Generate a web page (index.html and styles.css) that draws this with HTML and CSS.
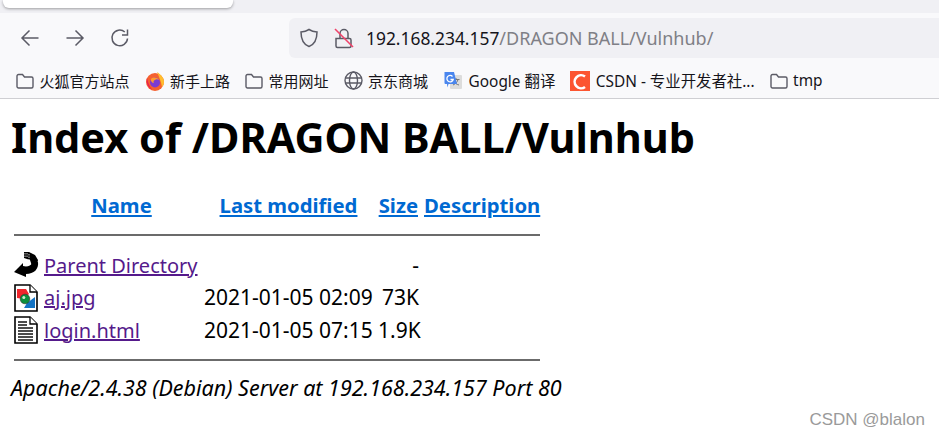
FILE: index.html
```html
<!DOCTYPE html>
<html lang="en">
<head>
    <meta charset="UTF-8">
    <title>Index of /DRAGON BALL/Vulnhub</title>
    <link rel="stylesheet" href="styles.css">
</head>
<body>
    <div class="tabstrip">
        <div class="tab"></div>
    </div>

    <div class="navbar">
        <div class="nav-btns">
            <svg class="nav-icon" width="20" height="20" viewBox="0 0 20 20"><path d="M18.5 10H2M9.5 2.500L2 10l7.500 7.500"/></svg>
            <svg class="nav-icon" width="20" height="20" viewBox="0 0 20 20"><path d="M1.500 10H18M10.500 2.500L18 10l-7.500 7.500"/></svg>
            <svg class="nav-icon" width="20" height="20" viewBox="0 0 20 20"><path d="M17.500 10.500A7.800 7.800 0 1 1 14.800 4M17.500 1.500v5.500H12"/></svg>
        </div>
        <div class="urlbar">
            <svg class="nav-icon shield" width="20" height="20" viewBox="0 0 20 20"><path d="M10 1.500c2.300 1.500 4.800 2.300 8 2.500 0 8-2.500 12.500-8 14.500C4.500 16.500 2 12 2 4c3.200-.2 5.700-1 8-2.500z"/></svg>
            <svg class="lock" width="20" height="22" viewBox="0 0 20 22">
                <path class="lock-body" d="M2 11.500h13.500a1.500 1.500 0 0 1 1.500 1.500v6a1.500 1.500 0 0 1-1.500 1.500h-12a1.500 1.500 0 0 1-1.500-1.500zM6 11V6.500a4 4 0 0 1 8 0V11"/>
                <path class="lock-slash" d="M1 2l18 18"/>
            </svg>
            <div class="url">192.168.234.157<span class="url-path">/DRAGON BALL/Vulnhub/</span></div>
        </div>
    </div>

    <div class="bookmarks">
        <div class="bm">
            <svg class="folder" width="18" height="16" viewBox="0 0 18 16"><path d="M1 3a1.500 1.500 0 0 1 1.500-1.500h4l2 2.500h7A1.500 1.500 0 0 1 17 5.500v8a1.500 1.500 0 0 1-1.500 1.500h-13A1.500 1.500 0 0 1 1 13.500z"/></svg>
            <span>火狐官方站点</span>
        </div>
        <div class="bm">
            <svg width="20" height="20" viewBox="0 0 20 20">
                <circle cx="10" cy="11" r="9" fill="#f5602f"/>
                <path d="M12 1c3 2 7 5 7 10 0 2-1 4-2 5-1-6-3-10-5-15z" fill="#ffbd2e"/>
                <path d="M2 7c-1 4 0 9 5 11.500C4 15 3 11 2 7z" fill="#e8204f"/>
                <circle cx="10" cy="11.500" r="5" fill="#7a3bd1"/>
                <path d="M6 8c2-2 6-2 8 1-2-1-3-1-4 0-1.500.5-2 2-1 3-2 0-3.500-2-3-4z" fill="#ff9a2e"/>
            </svg>
            <span>新手上路</span>
        </div>
        <div class="bm">
            <svg class="folder" width="18" height="16" viewBox="0 0 18 16"><path d="M1 3a1.500 1.500 0 0 1 1.500-1.500h4l2 2.500h7A1.500 1.500 0 0 1 17 5.500v8a1.500 1.500 0 0 1-1.500 1.500h-13A1.500 1.500 0 0 1 1 13.500z"/></svg>
            <span>常用网址</span>
        </div>
        <div class="bm">
            <svg class="globe" width="19" height="19" viewBox="0 0 19 19">
                <circle cx="9.500" cy="9.500" r="8.500"/>
                <ellipse cx="9.500" cy="9.500" rx="4" ry="8.500"/>
                <path d="M1 7h17M1 12h17"/>
            </svg>
            <span>京东商城</span>
        </div>
        <div class="bm">
            <svg width="20" height="20" viewBox="0 0 20 20">
                <rect x="7" y="4" width="12" height="14" rx="1" fill="#dcdcdc"/>
                <path d="M9.500 8.500h7M13 7v1.500M15 8.500c-.5 2.500-2.500 4.500-5 5.500M11 10.500c1 1.500 2.500 3 5 3.500" stroke="#777" stroke-width="1" fill="none"/>
                <path d="M1.500 1h9.500l3 12H5.500l-1 3.500-.5-3.500H2.500a1 1 0 0 1-1-1z" fill="#4a86ee"/>
                <path d="M9.500 5.500A3.200 3.200 0 1 0 10.200 8.500H7.500" stroke="#fff" stroke-width="1.300" fill="none"/>
            </svg>
            <span class="bm-latin">Google 翻译</span>
        </div>
        <div class="bm">
            <svg width="20" height="20" viewBox="0 0 20 20">
                <rect width="20" height="20" fill="#fc5531"/>
                <path d="M15 5.500A6.500 6.500 0 1 0 15 16" stroke="#fff" stroke-width="2.600" fill="none"/>
            </svg>
            <span class="bm-latin">CSDN - 专业开发者社...</span>
        </div>
        <div class="bm">
            <svg class="folder" width="18" height="16" viewBox="0 0 18 16"><path d="M1 3a1.500 1.500 0 0 1 1.500-1.500h4l2 2.500h7A1.500 1.500 0 0 1 17 5.500v8a1.500 1.500 0 0 1-1.500 1.500h-13A1.500 1.500 0 0 1 1 13.500z"/></svg>
            <span class="bm-latin">tmp</span>
        </div>
    </div>

    <div class="page">
        <h1>Index of /DRAGON BALL/Vulnhub</h1>

        <table class="listing">
            <tr class="head">
                <th class="c-icon"></th>
                <th class="c-name"><a href="#">Name</a></th>
                <th class="c-date"><a href="#">Last modified</a></th>
                <th class="c-size"><a href="#">Size</a></th>
                <th class="c-desc"><a href="#">Description</a></th>
            </tr>
            <tr class="rule"><td colspan="5"><hr></td></tr>
            <tr class="row row-first">
                <td class="c-icon">
                    <svg width="26" height="26" viewBox="0 0 26 26">
                        <path d="M0 20L9 11v3c4 1 8 0 9-3l6-1c1 7-4 12-12 12v3z" fill="#000"/>
                        <path d="M10 0h5l6 3 3 5-1 5-5 1-2-6-6-2z" fill="#000"/>
                        <path d="M11 1v4M13 1v5M15 2v6" stroke="#fff" stroke-width=".8" stroke-dasharray="1.500 1"/>
                    </svg>
                </td>
                <td><a href="#">Parent Directory</a></td>
                <td></td>
                <td class="c-size val">-</td>
                <td></td>
            </tr>
            <tr class="row">
                <td class="c-icon">
                    <svg width="24" height="28" viewBox="0 0 24 28">
                        <path d="M1 1h15l7 7v19H1z" fill="#fff" stroke="#000" stroke-width="1.600"/>
                        <path d="M16 1v7h7" fill="#fff" stroke="#000" stroke-width="1.300"/>
                        <path d="M3 5h9l3 5-5 5-7-1z" fill="#f0262c"/>
                        <path d="M21 13v11h-11l3-5z" fill="#1273c4"/>
                        <circle cx="11" cy="15" r="4.800" fill="#0b8f3c" stroke="#333" stroke-width=".6"/>
                        <circle cx="9.800" cy="13.600" r="1.500" fill="#cfeecf"/>
                    </svg>
                </td>
                <td><a href="#">aj.jpg</a></td>
                <td class="val">2021-01-05 02:09</td>
                <td class="c-size val">73K</td>
                <td></td>
            </tr>
            <tr class="row">
                <td class="c-icon">
                    <svg width="24" height="28" viewBox="0 0 24 28">
                        <path d="M1 1h15l7 7v19H1z" fill="#fff" stroke="#000" stroke-width="1.600"/>
                        <path d="M16 1v7h7" fill="#fff" stroke="#000" stroke-width="1.300"/>
                        <path d="M4 6h9M4 9h9M4 12h15M4 15h15M4 18h15M4 21h15M4 24h15" stroke="#111" stroke-width="1.500"/>
                    </svg>
                </td>
                <td><a href="#">login.html</a></td>
                <td class="val">2021-01-05 07:15</td>
                <td class="c-size val">1.9K</td>
                <td></td>
            </tr>
            <tr class="rule rule-end"><td colspan="5"><hr></td></tr>
        </table>

        <address>Apache/2.4.38 (Debian) Server at 192.168.234.157 Port 80</address>
    </div>

    <div class="watermark">CSDN @blalon</div>
</body>
</html>
```

FILE: styles.css
```css
html,body{
    margin:0;
    padding:0;
    height:100%;
    overflow:hidden;
}
body{
    position:relative;
    background:#fff;
    color:#000;
    font-family:"Noto Sans","Noto Sans CJK SC",sans-serif;
}
.tabstrip{
    height:13px;
    background:#f0f0f4;
    padding-left:3px;
}
.tab{
    width:230px;
    height:8px;
    background:#fff;
    border-radius:0 0 6px 6px;
    box-shadow:0 1px 3px rgba(0,0,0,.35);
}
.navbar{
    height:50px;
    background:#f9f9fb;
    display:flex;
    align-items:center;
}
.nav-btns{
    display:flex;
    gap:25px;
    padding-left:20px;
    width:289px;
    box-sizing:border-box;
}
.nav-icon{
    fill:none;
    stroke:#5b5b66;
    stroke-width:1.500;
}
.urlbar{
    flex:1;
    height:40px;
    background:#f0f0f4;
    border-radius:6px 0 0 6px;
    display:flex;
    align-items:center;
    padding-left:10px;
}
.shield{
    flex:none;
}
.lock{
    flex:none;
    margin-left:15px;
    fill:none;
}
.lock-body{
    stroke:#5b5b66;
    stroke-width:1.500;
}
.lock-slash{
    stroke:#f0436a;
    stroke-width:1.600;
}
.url{
    margin-left:12px;
    font-size:17.400px;
    color:#15141a;
    white-space:nowrap;
}
.url-path{
    font-size:18px;
    color:#7f7f86;
}
.bookmarks{
    height:35px;
    background:#f9f9fb;
    border-bottom:1px solid #cfcfd3;
    display:flex;
    align-items:center;
    padding-left:16px;
    gap:15px;
    font-size:15px;
    color:#15141a;
    white-space:nowrap;
}
.bm{
    display:flex;
    align-items:center;
    gap:5.500px;
}
.bm-latin{
    font-size:15.400px;
}
.folder,.globe{
    fill:none;
    stroke:#5b5b66;
    stroke-width:1.400;
}
.page{
    padding:0 0 0 11px;
}
h1{
    margin:0;
    padding-top:11px;
    font-size:41.500px;
    line-height:54px;
    font-weight:700;
}
.listing{
    border-collapse:collapse;
    margin:28px 0 0 3px;
    font-size:20px;
    line-height:27px;
    width:526px;
    table-layout:fixed;
}
.listing td,.listing th{
    box-sizing:border-box;
    padding:0;
    white-space:nowrap;
}
.listing th{
    font-size:20.300px;
}
.c-icon{
    width:30px;
}
.c-name{
    width:160px;
    text-align:center;
}
.listing .c-name,.listing .c-date{
    padding-right:5px;
}
.c-date{
    width:174px;
}
.c-size{
    width:42px;
    text-align:right;
}
.listing th.c-size{
    padding-right:2px;
}
.listing td.c-size{
    padding-right:1px;
}
.listing .c-desc{
    padding-left:4px;
}
.val{
    font-size:21px;
}
.listing a{
    color:#551a8b;
}
.listing .head a{
    color:#0069d2;
}
.rule hr{
    border:0;
    height:2px;
    background:#6b6b6b;
    margin:15px 0 13px;
}
.row td{
    height:32.500px;
    vertical-align:middle;
}
.row .c-icon svg{
    display:block;
}
.listing .rule-end hr{
    margin:12px 0 0;
}
address{
    margin-top:13px;
    font-size:21.500px;
    line-height:28px;
}
.watermark{
    position:absolute;
    right:14px;
    bottom:6px;
    font-family:"Liberation Sans",sans-serif;
    font-size:17px;
    color:#9a9a9a;
}
```
